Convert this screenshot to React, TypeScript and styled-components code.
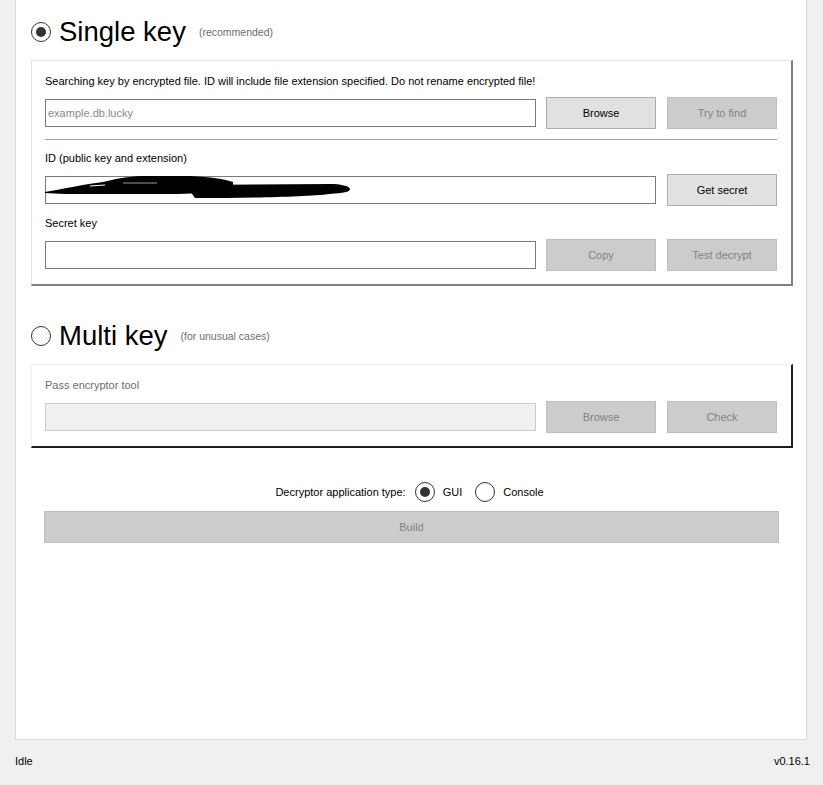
import React from 'react';
import styled, { createGlobalStyle } from 'styled-components';

const Global = createGlobalStyle`
  html, body { margin: 0; padding: 0; background: #f0f0f0; }
  body { font-family: "Liberation Sans", Arial, sans-serif; font-size: 11px; color: #000; }
  * { box-sizing: border-box; }
`;

const Window = styled.div`
  width: 823px;
  height: 785px;
  display: flex;
  flex-direction: column;
  background: #f0f0f0;
  overflow: hidden;
`;

const Panel = styled.div`
  margin-left: 15px;
  width: 792px;
  height: 740px;
  flex: none;
  background: #fff;
  border: 1px solid #d9d9d9;
  border-top: none;
  padding: 12px 13px 0 15px;
  display: flex;
  flex-direction: column;
`;

const Header = styled.div<{ $mt?: number }>`
  height: 40px;
  margin-top: ${(p) => p.$mt ?? 0}px;
  margin-bottom: 8px;
  display: flex;
  align-items: center;
`;

const Radio = styled.span<{ $checked?: boolean }>`
  width: 20px;
  height: 20px;
  flex: none;
  border-radius: 50%;
  border: 1px solid #333;
  background: #fff;
  display: flex;
  align-items: center;
  justify-content: center;
  &::after {
    content: '';
    width: 10px;
    height: 10px;
    border-radius: 50%;
    background: ${(p) => (p.$checked ? '#333' : 'transparent')};
  }
`;

const Title = styled.span`
  font-size: 27.5px;
  line-height: 40px;
  margin-left: 8px;
  color: #000;
`;

const Hint = styled.span`
  font-size: 10.5px;
  color: #6d6d6d;
  margin-left: 13px;
`;

const Group = styled.div<{ $dark?: boolean }>`
  border-top: 1px solid ${(p) => (p.$dark ? '#f0f0f0' : '#e3e3e3')};
  border-left: 1px solid ${(p) => (p.$dark ? '#f0f0f0' : '#e3e3e3')};
  border-right: 2px solid ${(p) => (p.$dark ? '#1e1e1e' : '#7f7f7f')};
  border-bottom: 2px solid ${(p) => (p.$dark ? '#1e1e1e' : '#7f7f7f')};
  padding: 12px 14px 13px 13px;
  display: flex;
  flex-direction: column;
`;

const Label = styled.div<{ $mt?: number; $muted?: boolean }>`
  line-height: 16px;
  height: 16px;
  margin-top: ${(p) => p.$mt ?? 0}px;
  color: ${(p) => (p.$muted ? '#6d6d6d' : '#000')};
  white-space: nowrap;
`;

const Row = styled.div<{ $mt?: number }>`
  display: grid;
  grid-template-columns: 1fr 110px 111px;
  column-gap: 10px;
  align-items: center;
  height: 32px;
  margin-top: ${(p) => p.$mt ?? 8}px;
  & > :last-child {
    justify-self: end;
    width: 110px;
  }
`;

const Field = styled.div<{ $disabled?: boolean; $span?: number }>`
  position: relative;
  height: 28px;
  grid-column: span ${(p) => p.$span ?? 1};
  border: 1px solid ${(p) => (p.$disabled ? '#cccccc' : '#7a7a7a')};
  background: ${(p) => (p.$disabled ? '#f0f0f0' : '#fff')};
  padding: 0 2px;
  display: flex;
  align-items: center;
`;

const Placeholder = styled.span`
  color: #8a8a8a;
`;

const Button = styled.div<{ $disabled?: boolean }>`
  height: 32px;
  border: 1px solid ${(p) => (p.$disabled ? '#bfbfbf' : '#adadad')};
  background: ${(p) => (p.$disabled ? '#cccccc' : '#e1e1e1')};
  color: ${(p) => (p.$disabled ? '#838383' : '#000')};
  display: flex;
  align-items: center;
  justify-content: center;
`;

const Separator = styled.div`
  height: 1px;
  background: #a0a0a0;
  margin-top: 10px;
`;

const Scribble = styled.svg`
  position: absolute;
  left: -1px;
  top: -2px;
  overflow: visible;
`;

const TypeRow = styled.div`
  margin-top: 34px;
  height: 20px;
  display: flex;
  align-items: center;
  justify-content: center;
  padding-right: 5px;
`;

const TypeLabel = styled.span`
  margin-right: 9px;
`;

const Option = styled.span<{ $last?: boolean }>`
  margin-left: 8px;
  margin-right: ${(p) => (p.$last ? 0 : 13)}px;
`;

const BuildButton = styled(Button)`
  margin: 9px 14px 0 13px;
`;

const Status = styled.div`
  flex: 1;
  display: flex;
  align-items: center;
  justify-content: space-between;
  padding: 0 13px 3px 15px;
`;

export default function App() {
  return (
    <Window>
      <Global />
      <Panel>
        <Header>
          <Radio $checked />
          <Title>Single key</Title>
          <Hint>(recommended)</Hint>
        </Header>
        <Group>
          <Label>Searching key by encrypted file. ID will include file extension specified. Do not rename encrypted file!</Label>
          <Row>
            <Field>
              <Placeholder>example.db.lucky</Placeholder>
            </Field>
            <Button>Browse</Button>
            <Button $disabled>Try to find</Button>
          </Row>
          <Separator />
          <Label $mt={10}>ID (public key and extension)</Label>
          <Row>
            <Field $span={2}>
              <Scribble width="310" height="26" viewBox="0 0 310 26">
                <path
                  d="M0 17 C 18 14, 40 9, 58 7 C 70 4, 80 2, 95 1 L 145 1 C 165 2, 180 4, 188 7 L 188 13 C 170 17, 150 19, 120 19 L 55 19 C 30 19, 10 19, 0 18 Z"
                  fill="#000"
                />
                <path
                  d="M145 10 L 285 9 C 295 9, 305 11, 305 14 C 305 17, 298 18, 285 19 C 260 22, 200 23, 150 23 L 145 16 Z"
                  fill="#000"
                />
                <path d="M78 8 L 112 8" stroke="#9a9a9a" strokeWidth="1" />
                <path d="M45 11 L 60 10" stroke="#ffffff" strokeWidth="1" />
              </Scribble>
            </Field>
            <Button>Get secret</Button>
          </Row>
          <Label $mt={9}>Secret key</Label>
          <Row>
            <Field />
            <Button $disabled>Copy</Button>
            <Button $disabled>Test decrypt</Button>
          </Row>
        </Group>

        <Header $mt={30}>
          <Radio />
          <Title>Multi key</Title>
          <Hint>(for unusual cases)</Hint>
        </Header>
        <Group $dark>
          <Label $muted>Pass encryptor tool</Label>
          <Row>
            <Field $disabled />
            <Button $disabled>Browse</Button>
            <Button $disabled>Check</Button>
          </Row>
        </Group>

        <TypeRow>
          <TypeLabel>Decryptor application type:</TypeLabel>
          <Radio $checked />
          <Option>GUI</Option>
          <Radio />
          <Option $last>Console</Option>
        </TypeRow>
        <BuildButton $disabled>Build</BuildButton>
      </Panel>
      <Status>
        <span>Idle</span>
        <span>v0.16.1</span>
      </Status>
    </Window>
  );
}
